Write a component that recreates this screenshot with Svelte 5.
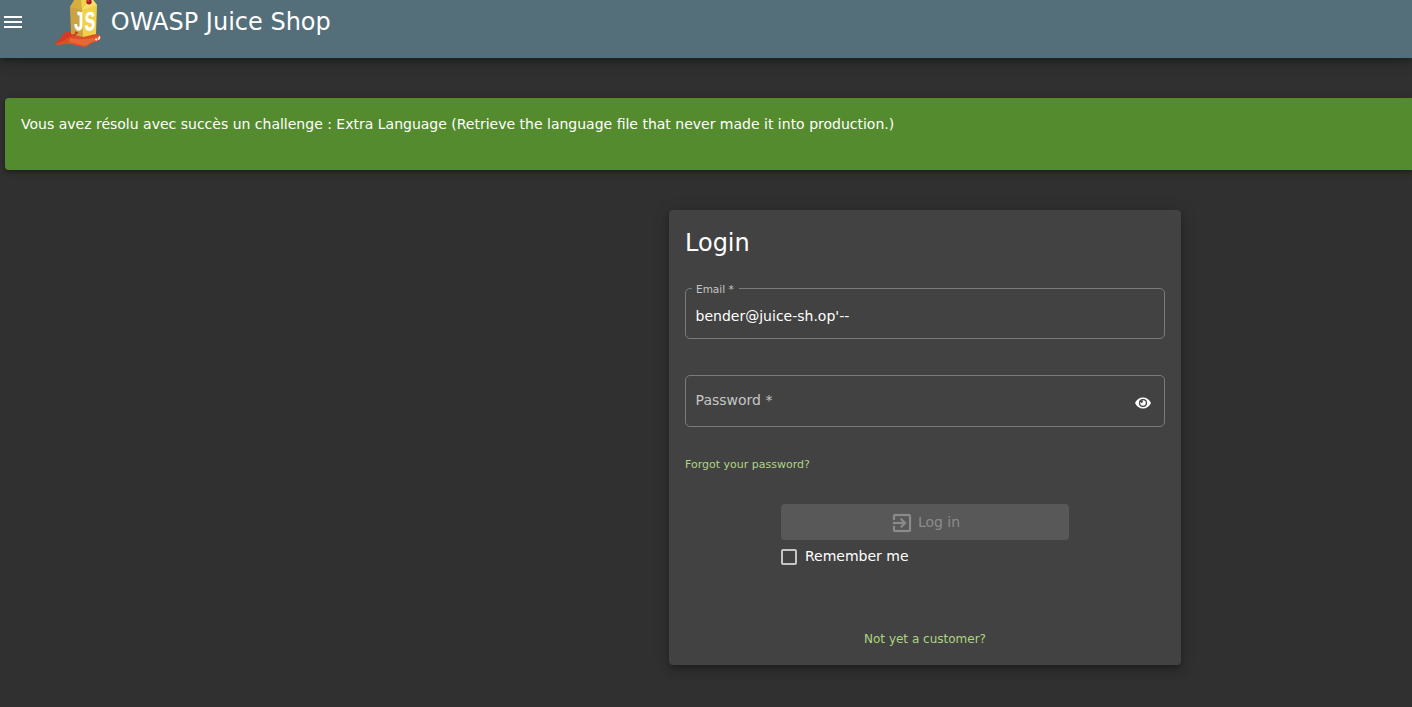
<script>
  let email = $state("bender@juice-sh.op'--");
</script>

<div class="page">
  <header class="toolbar">
    <button class="menu" aria-label="Menu">
      <svg width="24" height="24" viewBox="0 0 24 24"><path fill="#fff" d="M3 18h18v-2H3v2zm0-5h18v-2H3v2zm0-7v2h18V6H3z" /></svg>
    </button>
    <svg class="logo" width="60" height="58" viewBox="0 0 60 58" aria-hidden="true">
      <path fill="#dc5028" d="M5.5 42.5C10 41 12 34 16 32.3C23 31 44 33.5 49 34.5C52 37 51 41 45 42C40 42.5 39 46.8 34 46.8C28 46.6 24 43.5 17 44C11 44.5 7 46 5.5 44Z" />
      <path fill="#d43b22" d="M5.5 42.5C10 41 12 34 16 32.3L27 31L24 35C17 37 14 42 5.5 44Z" />
      <path fill="#e46a34" d="M20 38Q34 41 48 37Q50 40 44 41.2C39 42 38 46 34 45.7Q26 43 19 42Z" />
      <path fill="#c9a440" d="M24 0L20 7L21 34L33 37L33 11L29 0Z" />
      <path fill="#f1d04a" d="M28 0H43L47 5L46 34L33 37L32 10Z" />
      <path fill="#d5ae3e" d="M20 7L25 0H31L32 10Z" />
      <path fill="#f7df6a" d="M32 10L47 5L43 0H39Z" />
      <circle cx="39" cy="1.8" r="2.7" fill="#a91f20" />
      <circle cx="38.3" cy="1" r="1" fill="#df4a34" />
      <path fill="none" stroke="#ce3c25" stroke-width="1.8" d="M23 36L27 33L25 32" />
      <g fill="#fff" stroke="#fff" stroke-width=".5" font-family="Liberation Sans, sans-serif" font-weight="bold" font-size="25">
        <text transform="matrix(.66 .1 0 1.04 24.3 29.2)">J</text>
        <text transform="matrix(.62 -.1 0 1.04 34.8 31)">S</text>
      </g>
      <path fill="none" stroke="#fff" stroke-width="1.8" d="M49.3 36.3Q50 38 48.3 39.5M45.5 39L47 40" />
    </svg>
    <span class="brand">OWASP Juice Shop</span>
  </header>

  <section class="notice">Vous avez résolu avec succès un challenge : Extra Language (Retrieve the language file that never made it into production.)</section>

  <main class="card">
    <h1>Login</h1>
    <fieldset class="field email">
      <legend>Email *</legend>
      <input type="text" aria-label="Email" bind:value={email} spellcheck="false" />
    </fieldset>
    <div class="field password">
      <input type="password" aria-label="Password" placeholder="Password *" />
      <svg class="eye" width="16" height="16" viewBox="0 0 16 16">
        <path fill="#fff" d="M0 8C1.5 4.5 4.6 2.5 8 2.5S14.5 4.5 16 8C14.5 11.5 11.4 13.5 8 13.5S1.5 11.5 0 8Z" />
        <circle cx="8" cy="8" r="4.1" fill="#424242" />
        <circle cx="8" cy="8" r="2.8" fill="#fff" />
        <circle cx="6.6" cy="6.6" r="1.3" fill="#424242" />
      </svg>
    </div>
    <a class="forgot" href="#forgot">Forgot your password?</a>
    <div class="actions">
      <button class="login" disabled>
        <svg width="24" height="24" viewBox="0 0 24 24"><path fill="currentColor" stroke="currentColor" stroke-width=".2" d="M10.09 15.59L11.5 17l5-5-5-5-1.41 1.41L12.67 11H3v2h9.67l-2.58 2.59zM19 3H5c-1.11 0-2 .9-2 2v4h2V5h14v14H5v-4H3v4c0 1.1.89 2 2 2h14c1.1 0 2-.9 2-2V5c0-1.1-.9-2-2-2z" /></svg>
        <span>Log in</span>
      </button>
      <label class="remember"><input type="checkbox" /><span>Remember me</span></label>
    </div>
    <a class="register" href="#register">Not yet a customer?</a>
  </main>
</div>

<style>
  :global(body) { background: #303030; overflow: hidden; }
  .page {
    box-sizing: border-box;
    height: 707px;
    overflow: hidden;
    background: #303030;
    color: #fff;
    font: 14px/20px "DejaVu Sans", sans-serif;
  }
  .toolbar {
    display: flex;
    height: 58px;
    background: #546e7a;
    box-shadow: 0 3px 5px -1px rgba(0,0,0,.2), 0 6px 10px rgba(0,0,0,.14), 0 1px 18px rgba(0,0,0,.12);
  }
  .menu { width: 50px; height: 44px; padding: 0 0 0 1px; border: 0; background: none; display: flex; align-items: center; }
  .logo { flex: none; }
  .brand { margin-left: 0.8px; font-size: 24px; line-height: 44px; white-space: nowrap; }
  .notice {
    box-sizing: border-box;
    height: 72px;
    margin: 40px 0 0 5px;
    padding: 16px;
    border-radius: 4px 0 0 4px;
    background: #558b2f;
    box-shadow: 0 3px 3px -2px rgba(0,0,0,.2), 0 3px 4px rgba(0,0,0,.14), 0 1px 8px rgba(0,0,0,.12);
  }
  .card {
    box-sizing: border-box;
    display: flex;
    flex-direction: column;
    width: 512px;
    height: 455px;
    margin: 40px 0 0 669px;
    padding: 17px 16px 16px;
    border-radius: 4px;
    background: #424242;
    box-shadow: 0 3px 5px -1px rgba(0,0,0,.2), 0 6px 10px rgba(0,0,0,.14), 0 1px 18px rgba(0,0,0,.12);
  }
  h1 { margin: 0; font-size: 24px; line-height: 32px; font-weight: 400; }
  .field { box-sizing: border-box; border: 1px solid #7b7b7b; border-radius: 5px; margin: 0; min-width: 0; }
  .field input {
    border: 0; outline: 0; padding: 0; background: none; color: #fff;
    font: inherit; height: 20px; flex: 1; min-width: 0;
  }
  .email { height: 59px; margin-top: 21px; padding: 0 9.6px; }
  .email legend { margin-left: -3.6px; padding: 2px 5px 0 4px; font-size: 10.5px; line-height: 14px; height: 14px; color: #c6c6c6; }
  .email input { display: block; width: 100%; margin-top: 10px; }
  .password { display: flex; height: 52px; margin-top: 36px; padding: 14px 13px 0 9.6px; }
  .password input::placeholder { color: #c6c6c6; opacity: 1; }
  .eye { margin-top: 5px; }
  a { color: #aed581; text-decoration: none; }
  .forgot { margin-top: 30px; font-size: 11px; line-height: 16px; align-self: flex-start; }
  .actions { width: 288px; margin: 31px auto 0; }
  .login {
    display: flex; align-items: center; justify-content: center; gap: 4px;
    width: 288px; height: 36px; padding: 0; border: 0; border-radius: 4px;
    background: #585858; color: #8c8c8c; font: inherit;
  }
  .login svg { margin-top: 2px; }
  .remember { display: flex; gap: 8px; margin-top: 6px; }
  .remember input {
    appearance: none; box-sizing: border-box; width: 16px; height: 16px;
    margin: 3px 0 0; border: 2px solid #c6c6c6; border-radius: 2px;
  }
  .register { margin-top: 63px; align-self: center; font-size: 12px; line-height: 20px; }
</style>
